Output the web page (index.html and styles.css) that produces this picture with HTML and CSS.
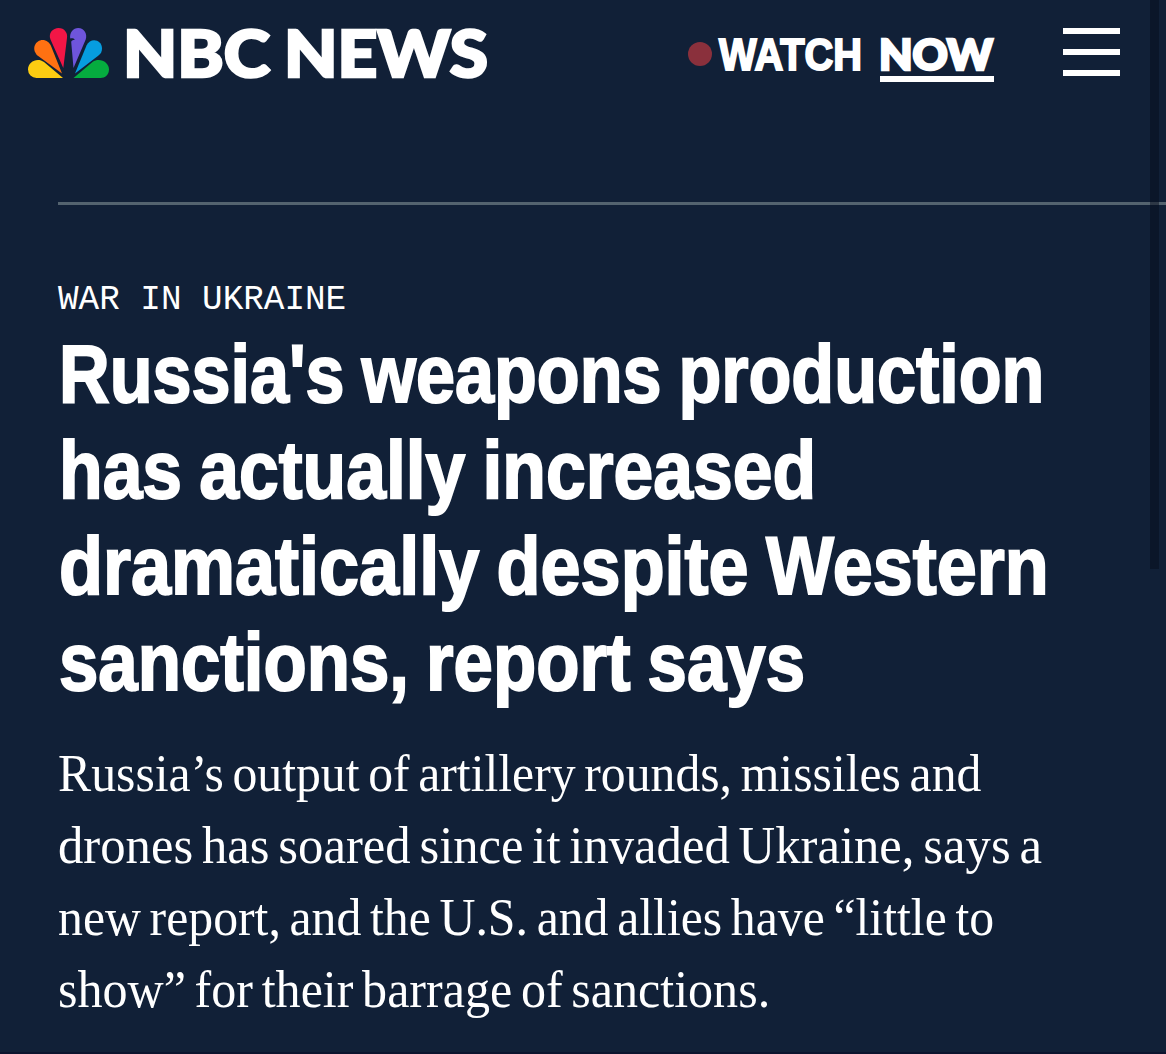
FILE: index.html
```
<!DOCTYPE html>
<html lang="en">
<head>
    <meta charset="UTF-8">
    <meta name="viewport" content="width=device-width, initial-scale=1.0">
    <title>Russia's weapons production has actually increased | NBC News</title>
    <link rel="stylesheet" href="styles.css">
</head>
<body>
    <header class="header">
        <a class="logo" aria-label="NBC News">
            <svg width="460" height="56" viewBox="28 26 460 56">
                <path fill="#fccc12" d="M63 78H36.500a8.500 8.500 0 0 1-8.500-8.500c0-8 9.500-12.500 16-7.500z"/>
                <path fill="#ff7112" d="M62 73.500L37.500 55.500c-7-7-1.500-15.500 5-15.500 4 0 7 2.500 8.300 5.500z"/>
                <path fill="#f21646" d="M63.300 68L50.500 39.500C48 33 53 28 58.500 28c6 0 9.500 5 8.500 10z"/>
                <path fill="#6e55dc" d="M73.500 68L71.200 42c.3-1.400 1.300-2 3.600-2.200-.8-1.300-2.500-1.700-4.600-1.300-.7-6 3-10.500 8-10.500 6 0 9.500 6 7.500 11.500z"/>
                <path fill="#069de0" d="M75 73.500L86.500 45.500c4-8.500 15.500-6 15.500 3 0 3-1 5-3.500 7z"/>
                <path fill="#05ac3f" d="M73.500 78L92.500 62c7-5 16.500 0 16.500 7.500 0 5-4 8.500-8.500 8.500z"/>
                <text class="logo-text" x="123" y="76.500" textLength="147" lengthAdjust="spacingAndGlyphs">NBC</text>
                <text class="logo-text" x="284" y="76.500" textLength="204" lengthAdjust="spacingAndGlyphs">NEWS</text>
            </svg>
        </a>
        <a class="watch" aria-label="Watch now">
            <svg width="308" height="56" viewBox="687 28 308 56">
                <circle cx="700" cy="54" r="12" fill="#8a303c"/>
                <text class="watch-text" x="719" y="70" textLength="143" lengthAdjust="spacingAndGlyphs">WATCH</text>
                <text class="now-text" x="879" y="69.500" textLength="114" lengthAdjust="spacingAndGlyphs">NOW</text>
                <rect x="880" y="76" width="114" height="6" fill="#fff"/>
            </svg>
        </a>
        <div class="menu">
            <span></span>
            <span></span>
            <span></span>
        </div>
    </header>

    <main class="article">
        <p class="eyebrow">WAR IN UKRAINE</p>
        <h1 class="headline">
            <span class="h-1">Russia's weapons production</span>
            <span class="h-2">has actually increased</span>
            <span class="h-3">dramatically despite Western</span>
            <span class="h-4">sanctions, report says</span>
        </h1>
        <p class="dek">
            <span class="d-1">Russia’s output of artillery rounds, missiles and</span>
            <span class="d-2">drones has soared since it invaded Ukraine, says a</span>
            <span class="d-3">new report, and the U.S. and allies have “little to</span>
            <span class="d-4">show” for their barrage of sanctions.</span>
        </p>
    </main>

    <div class="scrollbar"></div>
</body>
</html>
```

FILE: styles.css
```
* {
    margin: 0;
    padding: 0;
    box-sizing: border-box;
}

body {
    height: 1054px;
    overflow: hidden;
    background-color: #112037;
    border-bottom: 2px solid #0c142e;
    color: #fff;
}

.header {
    display: flex;
    align-items: flex-start;
    height: 202px;
    padding: 26px 46px 0 28px;
}

.header svg {
    display: block;
    overflow: visible;
}

.logo-text {
    font: 900 64px Lato, sans-serif;
    fill: #fff;
    stroke: #fff;
    stroke-width: 2.6px;
}

.watch {
    margin: 2px 0 0 199px;
}

.watch-text {
    font: bold 45px "Liberation Sans", sans-serif;
    fill: #fff;
    stroke: #fff;
    stroke-width: 2px;
}

.now-text {
    font: 900 42px Lato, sans-serif;
    fill: #fff;
    stroke: #fff;
    stroke-width: 2.6px;
}

.menu {
    display: flex;
    flex-direction: column;
    gap: 15px;
    width: 57px;
    margin: 2px 0 0 auto;
}

.menu span {
    height: 6px;
    background-color: #fff;
}

.article {
    margin-left: 58px;
    padding-top: 75px;
    border-top: 3px solid #54636f;
    white-space: nowrap;
}

.eyebrow {
    font: 34.3px/40px "Liberation Mono", monospace;
}

.headline {
    margin-top: 6px;
    padding-left: 1px;
    font: bold 82px/96px "Liberation Sans", sans-serif;
    word-spacing: -3px;
    -webkit-text-stroke: 2px #fff;
}

.headline span,
.dek span {
    display: block;
    width: max-content;
    transform-origin: left;
}

.headline .h-1 {
    transform: scaleX(0.855);
}

.headline .h-2 {
    transform: scaleX(0.871);
}

.headline .h-3 {
    transform: scaleX(0.878);
}

.headline .h-4 {
    transform: scaleX(0.863);
}

.dek {
    margin-top: 28px;
    font: 52px/72px "Liberation Serif", serif;
    word-spacing: -4px;
}

.dek .d-1 {
    transform: scaleX(0.9565);
}

.dek .d-2 {
    transform: scaleX(0.975);
}

.dek .d-3 {
    transform: scaleX(0.9575);
}

.dek .d-4 {
    transform: scaleX(0.963);
}

.scrollbar {
    position: absolute;
    top: 0;
    right: 7px;
    width: 9px;
    height: 569px;
    background-color: rgba(5, 12, 28, 0.5);
}
```
